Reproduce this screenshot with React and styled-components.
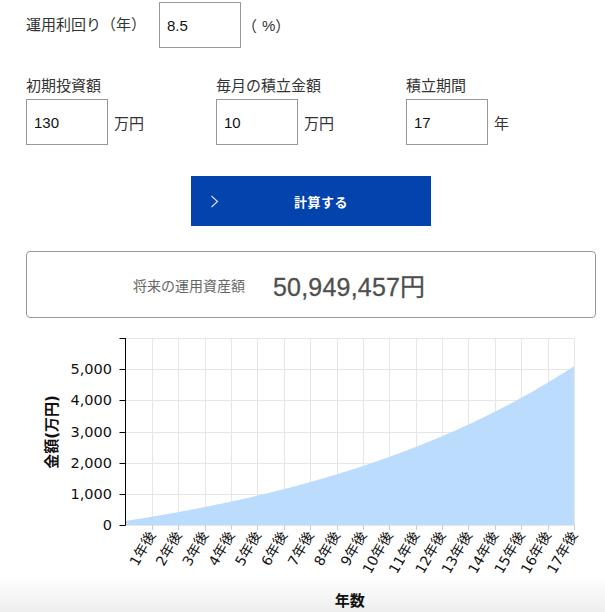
import React from "react";
import styled, { createGlobalStyle } from "styled-components";

const Global = createGlobalStyle`
  html, body { margin: 0; padding: 0; }
  body {
    font-family: "Liberation Sans", "Noto Sans CJK JP", sans-serif;
    color: #333;
  }
  * { box-sizing: border-box; }
`;

const Page = styled.div`
  width: 605px;
  min-height: 612px;
  overflow: hidden;
  background: linear-gradient(180deg, #ffffff 0, #ffffff 576px, #eeeeee 612px);
`;

const Form = styled.div`
  padding: 2px 9px 0 26px;
  display: flex;
  flex-direction: column;
`;

const InlineRow = styled.div`
  display: flex;
  align-items: center;
  height: 46px;
`;

const Label = styled.span`
  font-size: 15px;
  line-height: 22px;
  color: #333;
  width: ${(p) => (p.$width ? `${p.$width}px` : "auto")};
  flex-shrink: 0;
`;

const Unit = styled.span`
  font-size: 15px;
  color: #333;
  margin-left: ${(p) => p.$gap ?? 6}px;
  display: inline-flex;
  align-items: center;
`;

const Paren = styled.span`
  display: inline-block;
  margin-left: ${(p) => p.$before}px;
  margin-right: ${(p) => p.$after}px;
`;

const Input = styled.input`
  width: 82px;
  height: 46px;
  border: 1px solid #999;
  border-radius: 0;
  padding: 0 0 0 7px;
  font-family: "Liberation Sans", "Noto Sans CJK JP", sans-serif;
  font-size: 15px;
  color: #111;
  background: #fff;
  outline: none;
`;

const FieldsRow = styled.div`
  display: grid;
  grid-template-columns: repeat(3, 190px);
  margin-top: 27px;
`;

const Field = styled.div`
  display: flex;
  flex-direction: column;
  gap: 2px;
`;

const InputLine = styled.div`
  display: flex;
  align-items: center;
`;

const ButtonWrap = styled.div`
  display: flex;
  justify-content: center;
  margin-top: 31px;
`;

const CalcButton = styled.button`
  position: relative;
  width: 240px;
  height: 50px;
  border: none;
  background: #0243ae;
  color: #fff;
  font-family: "Noto Sans CJK JP", sans-serif;
  font-weight: 700;
  font-size: 13px;
  letter-spacing: 0.5px;
  cursor: pointer;
  display: flex;
  align-items: center;
  justify-content: center;
  padding: 0 0 0 20px;
`;

const Chevron = styled.svg`
  position: absolute;
  left: 19px;
  top: 19px;
`;

const ResultBox = styled.div`
  margin-top: 25px;
  height: 67px;
  border: 1px solid #999;
  border-radius: 4px;
  display: flex;
  align-items: center;
  padding-left: 106px;
  gap: 28px;
`;

const ResultLabel = styled.span`
  font-family: "Noto Sans CJK JP", sans-serif;
  font-size: 14px;
  color: #666;
`;

const ResultValue = styled.span`
  font-family: "Liberation Sans", "Noto Sans CJK JP", sans-serif;
  font-size: 25px;
  color: #4f4f4f;
  letter-spacing: 0.2px;
  -webkit-text-stroke: 0.3px #4f4f4f;
`;

const ChartSvg = styled.svg`
  display: block;
  margin-top: 11px;
`;

const rate = 0.085 / 12;
const initial = 130;
const monthly = 10;
const months = 204;

const PL = 125.5;
const PR = 574;
const PT = 9;
const PB = 196;
const yMax = 6000;

const xOf = (m) => PL + (m / months) * (PR - PL);
const yOf = (v) => PB - (v / yMax) * (PB - PT);

function buildArea() {
  const pts = [];
  for (let m = 0; m <= months; m++) {
    const g = Math.pow(1 + rate, m);
    const v = initial * g + (monthly * (g - 1)) / rate;
    pts.push(`${xOf(m).toFixed(2)},${yOf(v).toFixed(2)}`);
  }
  return `M${PL},${PB} L${pts.join(" L")} L${PR},${PB} Z`;
}

const axisFont = `"DejaVu Sans", "Noto Sans CJK JP", sans-serif`;

function Chart() {
  const area = buildArea();
  const yTicks = [0, 1000, 2000, 3000, 4000, 5000, 6000];
  const years = Array.from({ length: 17 }, (_, i) => i + 1);
  return (
    <ChartSvg width="605" height="283" viewBox="0 0 605 283">
      {yTicks.map((v) => (
        <line key={`h${v}`} x1={PL} x2={PR} y1={Math.round(yOf(v)) + 0.5} y2={Math.round(yOf(v)) + 0.5} stroke="#e6e6e6" strokeWidth="1" />
      ))}
      {years.map((y) => {
        const x = Math.round(xOf(y * 12)) + 0.5;
        return <line key={`v${y}`} x1={x} x2={x} y1={PT} y2={PB} stroke="#e6e6e6" strokeWidth="1" />;
      })}
      <path d={area} fill="#bbdcfd" />
      {years.map((y) => {
        const x = Math.round(xOf(y * 12)) + 0.5;
        return <line key={`t${y}`} x1={x} x2={x} y1={PB} y2={PB + 5} stroke="#cccccc" strokeWidth="1" />;
      })}
      <line x1={PL} x2={PL} y1={PT} y2={PB + 0.5} stroke="#000" strokeWidth="1" />
      {yTicks.map((v) => {
        const y = Math.round(yOf(v)) + 0.5;
        return <line key={`yt${v}`} x1={PL - 6} x2={PL} y1={y} y2={y} stroke="#000" strokeWidth="1" />;
      })}
      {yTicks.slice(0, 6).map((v) => (
        <text key={`yl${v}`} x="112" y={yOf(v) + 5} textAnchor="end" fontFamily={axisFont} fontSize="14.5" fill="#111">
          {v.toLocaleString("en-US")}
        </text>
      ))}
      <text
        transform="translate(57 103) rotate(-90)"
        textAnchor="middle"
        fontFamily={axisFont}
        fontWeight="700"
        fontSize="15"
        fill="#111"
      >
        金額(万円)
      </text>
      {years.map((y) => {
        const x = xOf(y * 12) + 4;
        return (
          <text
            key={`xl${y}`}
            transform={`translate(${x} ${PB + 10}) rotate(-60)`}
            textAnchor="end"
            fontFamily={axisFont}
            fontSize="14"
            fill="#111"
          >
            {y}年後
          </text>
        );
      })}
      <text x={(PL + PR) / 2} y="277" textAnchor="middle" fontFamily={axisFont} fontWeight="700" fontSize="15" fill="#111">
        年数
      </text>
    </ChartSvg>
  );
}

export default function App() {
  return (
    <Page>
      <Global />
      <Form>
        <InlineRow>
          <Label $width={133}>運用利回り（年）</Label>
          <Input defaultValue="8.5" />
          <Unit $gap={0}>
            <Paren $before={1} $after={5}>（</Paren>%<Paren $before={0} $after={0}>）</Paren>
          </Unit>
        </InlineRow>
        <FieldsRow>
          <Field>
            <Label>初期投資額</Label>
            <InputLine>
              <Input defaultValue="130" />
              <Unit>万円</Unit>
            </InputLine>
          </Field>
          <Field>
            <Label>毎月の積立金額</Label>
            <InputLine>
              <Input defaultValue="10" />
              <Unit>万円</Unit>
            </InputLine>
          </Field>
          <Field>
            <Label>積立期間</Label>
            <InputLine>
              <Input defaultValue="17" />
              <Unit>年</Unit>
            </InputLine>
          </Field>
        </FieldsRow>
        <ButtonWrap>
          <CalcButton type="button">
            <Chevron width="9" height="13" viewBox="0 0 9 13">
              <path d="M1.5 1 L7.5 6.5 L1.5 12" fill="none" stroke="#d6def2" strokeWidth="1.2" />
            </Chevron>
            計算する
          </CalcButton>
        </ButtonWrap>
        <ResultBox>
          <ResultLabel>将来の運用資産額</ResultLabel>
          <ResultValue>50,949,457円</ResultValue>
        </ResultBox>
      </Form>
      <Chart />
    </Page>
  );
}
